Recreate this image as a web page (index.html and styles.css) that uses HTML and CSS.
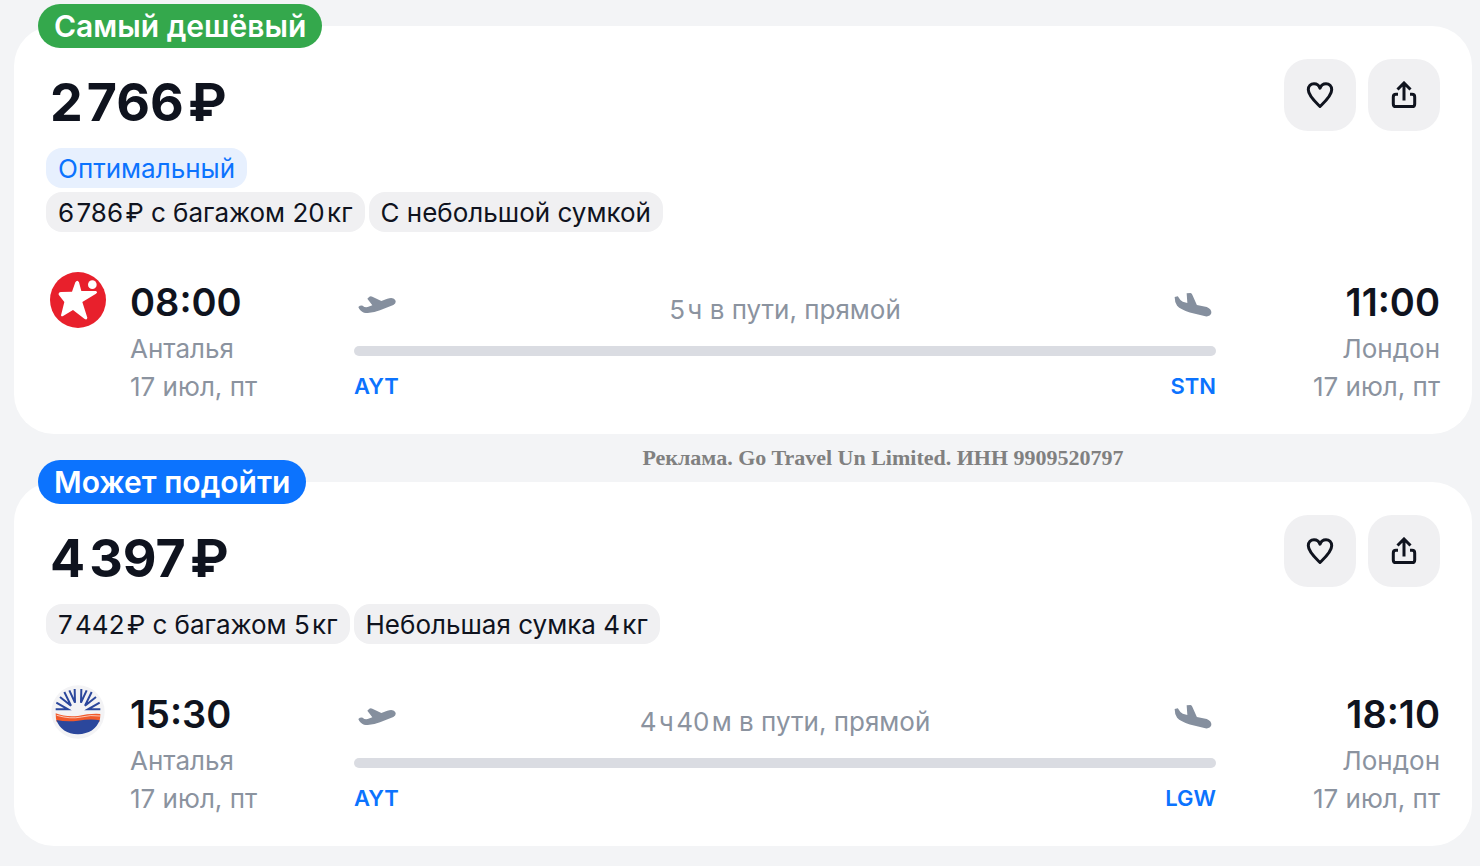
FILE: index.html
```html
<!DOCTYPE html>
<html lang="ru">
<head>
  <meta charset="UTF-8">
  <meta name="viewport" content="width=device-width, initial-scale=1.0">
  <title>Анталья — Лондон</title>
  <link rel="stylesheet" href="styles.css">
</head>
<body>

  <!-- shared icons -->
  <svg class="sprite" aria-hidden="true">
    <symbol id="heart" viewBox="0 0 28 28">
      <path d="M14 25.500 C11 22.500 2.300 15 2.300 8.800 C2.300 5 4.800 2.700 8 2.700 C10.800 2.700 13 4.200 14 7.200 C15 4.200 17.200 2.700 20 2.700 C23.200 2.700 25.700 5 25.700 8.800 C25.700 15 17 22.500 14 25.500 Z" fill="none" stroke="currentColor" stroke-width="3" stroke-linejoin="round"/>
    </symbol>
    <symbol id="share" viewBox="0 0 28 28">
      <path d="M14 19.500 V2 M7.500 8.500 L14 2 L20.500 8.500 M8 13.200 H6 Q3.300 13.200 3.300 15.900 V22.900 Q3.300 25.600 6 25.600 H22 Q24.700 25.600 24.700 22.900 V15.900 Q24.700 13.200 22 13.200 H20" fill="none" stroke="currentColor" stroke-width="3"/>
    </symbol>
    <symbol id="takeoff" viewBox="0 0 114 54">
      <path d="M1 33 Q6 28 14 29 Q20 35 29 33 L43 28 L28 8 L34 2 Q38 0 43 2 L70 15 L88 8 Q105 3 111 11 Q117 20 106 27 L66 43 Q38 54 18 50 Q6 46 1 33 Z" fill="currentColor"/>
    </symbol>
    <symbol id="landing" viewBox="0 0 106 68">
      <path d="M1 11 L10 9 Q16 20 24 25 L37 28 L35 1 L46 0 Q49 1 51 5 L64 34 L92 40 Q106 46 105 57 Q101 68 88 66 L44 55 Q18 47 8 36 Q1 26 1 11 Z" fill="currentColor"/>
    </symbol>
  </svg>

  <main class="tickets">

    <article class="ticket">
      <div class="badge badge-green">Самый дешёвый</div>
      <header class="ticket-header">
        <h2 class="price">2&#8202;766&#8202;₽</h2>
        <div class="actions">
          <button class="action" type="button" aria-label="В избранное"><svg class="action-icon"><use href="#heart"/></svg></button>
          <button class="action" type="button" aria-label="Поделиться"><svg class="action-icon"><use href="#share"/></svg></button>
        </div>
      </header>
      <div class="chips">
        <span class="chip chip-blue">Оптимальный</span>
      </div>
      <div class="chips">
        <span class="chip">6&#8202;786&#8202;₽ с багажом 20&#8202;кг</span>
        <span class="chip">С небольшой сумкой</span>
      </div>
      <div class="flight">
        <svg class="airline" viewBox="0 0 168 168" role="img" aria-label="Corendon">
          <circle cx="84" cy="84" r="84" fill="#e8202c"/>
          <path d="M76 31 Q82 22 87 31 L94 57 L137 57 Q145 60 138 65 L97 90 L112 137 Q111 146 103 140 L69 114 L38 133 Q31 134 34 126 L43 90 L26 68 Q25 60 33 60 L66 59 Z" fill="#fff"/>
          <circle cx="127" cy="38" r="13" fill="#fff"/>
        </svg>
        <div class="point">
          <div class="time">08:00</div>
          <div class="place">Анталья</div>
          <div class="place">17 июл, пт</div>
        </div>
        <div class="route">
          <div class="route-info">
            <svg class="plane"><use href="#takeoff"/></svg>
            <span class="duration">5&#8202;ч в пути, прямой</span>
            <svg class="plane"><use href="#landing"/></svg>
          </div>
          <div class="route-line"></div>
          <div class="airports"><span>AYT</span><span>STN</span></div>
        </div>
        <div class="point point-right">
          <div class="time">11:00</div>
          <div class="place">Лондон</div>
          <div class="place">17 июл, пт</div>
        </div>
      </div>
    </article>

    <p class="ad">Реклама. Go Travel Un Limited. ИНН 9909520797</p>

    <article class="ticket">
      <div class="badge badge-blue">Может подойти</div>
      <header class="ticket-header">
        <h2 class="price">4&#8202;397&#8202;₽</h2>
        <div class="actions">
          <button class="action" type="button" aria-label="В избранное"><svg class="action-icon"><use href="#heart"/></svg></button>
          <button class="action" type="button" aria-label="Поделиться"><svg class="action-icon"><use href="#share"/></svg></button>
        </div>
      </header>
      <div class="chips">
        <span class="chip">7&#8202;442&#8202;₽ с багажом 5&#8202;кг</span>
        <span class="chip">Небольшая сумка 4&#8202;кг</span>
      </div>
      <div class="flight">
        <svg class="airline" viewBox="0 0 168 168" role="img" aria-label="SunExpress">
          <circle cx="84" cy="84" r="80" fill="#f3f3f5"/>
          <path d="M17 76 H54 L19 56 M30 39 L63 65 L43 24 M58 19 L75 56 L74 15 M94 15 L93 56 L110 19 M125 24 L105 65 L138 39 M149 56 L114 76 H151" fill="none" stroke="#2b479c" stroke-width="6"/>
          <path d="M17 88 Q46 100 84 96 Q120 88 151 90 Q151 104 148 114 H20 Q17 102 17 88 Z" fill="#f15a2b"/>
          <path d="M20 94 Q62 106 94 99 Q122 92 150 96" fill="none" stroke="#fff" stroke-width="2"/>
          <path d="M19 108 Q50 114 84 110 Q124 104 149 109 Q134 149 84 151 Q34 149 19 108 Z" fill="#2b479c"/>
        </svg>
        <div class="point">
          <div class="time">15:30</div>
          <div class="place">Анталья</div>
          <div class="place">17 июл, пт</div>
        </div>
        <div class="route">
          <div class="route-info">
            <svg class="plane"><use href="#takeoff"/></svg>
            <span class="duration">4&#8202;ч&#8202;40&#8202;м в пути, прямой</span>
            <svg class="plane"><use href="#landing"/></svg>
          </div>
          <div class="route-line"></div>
          <div class="airports"><span>AYT</span><span>LGW</span></div>
        </div>
        <div class="point point-right">
          <div class="time">18:10</div>
          <div class="place">Лондон</div>
          <div class="place">17 июл, пт</div>
        </div>
      </div>
    </article>

  </main>

</body>
</html>
```
FILE: styles.css
```css
* {
  box-sizing: border-box;
}
body {
  margin: 0;
  font-family: Inter, sans-serif;
  font-size: 26px;
  color: #0f131e;
  background: #f3f4f6;
}
.sprite {
  display: none;
}
.tickets {
  padding: 26px 8px 20px 14px;
}
.ticket {
  position: relative;
  padding: 33px 32px 28px;
  background: #fff;
  border-radius: 40px;
}
.badge {
  position: absolute;
  top: -22px;
  left: 24px;
  padding: 0 16px;
  border-radius: 22px;
  font-size: 30px;
  font-weight: 600;
  line-height: 44px;
  color: #fff;
}
.badge-green {
  background: #34a84c;
}
.badge-blue {
  background: #0c73fe;
}
.ticket-header {
  display: flex;
  justify-content: space-between;
  padding-left: 4px;
  margin-bottom: 17px;
}
.price {
  margin: 0;
  padding-top: 8px;
  font-size: 52px;
  font-weight: 700;
  line-height: 72px;
  height: 72px;
}
.actions {
  display: flex;
  gap: 12px;
}
.action {
  display: flex;
  justify-content: center;
  align-items: center;
  width: 72px;
  height: 72px;
  padding: 0;
  border: none;
  border-radius: 24px;
  color: #0f131e;
  background: #f0f0f2;
  cursor: pointer;
}
.action-icon {
  width: 28px;
  height: 28px;
}
.chips {
  display: flex;
  gap: 4px;
  margin-bottom: 4px;
}
.chip {
  padding: 2px 12px 0;
  border-radius: 16px;
  line-height: 38px;
  background: #f0f0f2;
}
.chip-blue {
  color: #0c73fe;
  background: #e7f0fe;
}
.flight {
  display: grid;
  grid-template-columns: 56px 200px 1fr 200px;
  column-gap: 24px;
  padding-left: 4px;
  margin-top: 40px;
}
.airline {
  width: 56px;
  height: 56px;
}
.time {
  padding-top: 2px;
  font-size: 38px;
  font-weight: 600;
  line-height: 56px;
}
.place {
  line-height: 38px;
  color: #8b939f;
}
.point-right {
  text-align: right;
}
.route-info {
  display: flex;
  justify-content: space-between;
  align-items: center;
  height: 74px;
  padding: 0 4px;
  color: #8b939f;
}
.plane {
  width: 38px;
  height: 24px;
  margin-bottom: 8px;
  color: #858f9e;
}
.route-line {
  height: 10px;
  border-radius: 5px;
  background: #dadce2;
}
.airports {
  display: flex;
  justify-content: space-between;
  margin-top: 11px;
  font-size: 22px;
  font-weight: 600;
  line-height: 38px;
  color: #0c73fe;
}
.ad {
  margin: 0;
  padding-left: 280px;
  font-family: "Liberation Serif", serif;
  font-size: 22px;
  font-weight: 700;
  line-height: 48px;
  text-align: center;
  color: #808080;
}
```
